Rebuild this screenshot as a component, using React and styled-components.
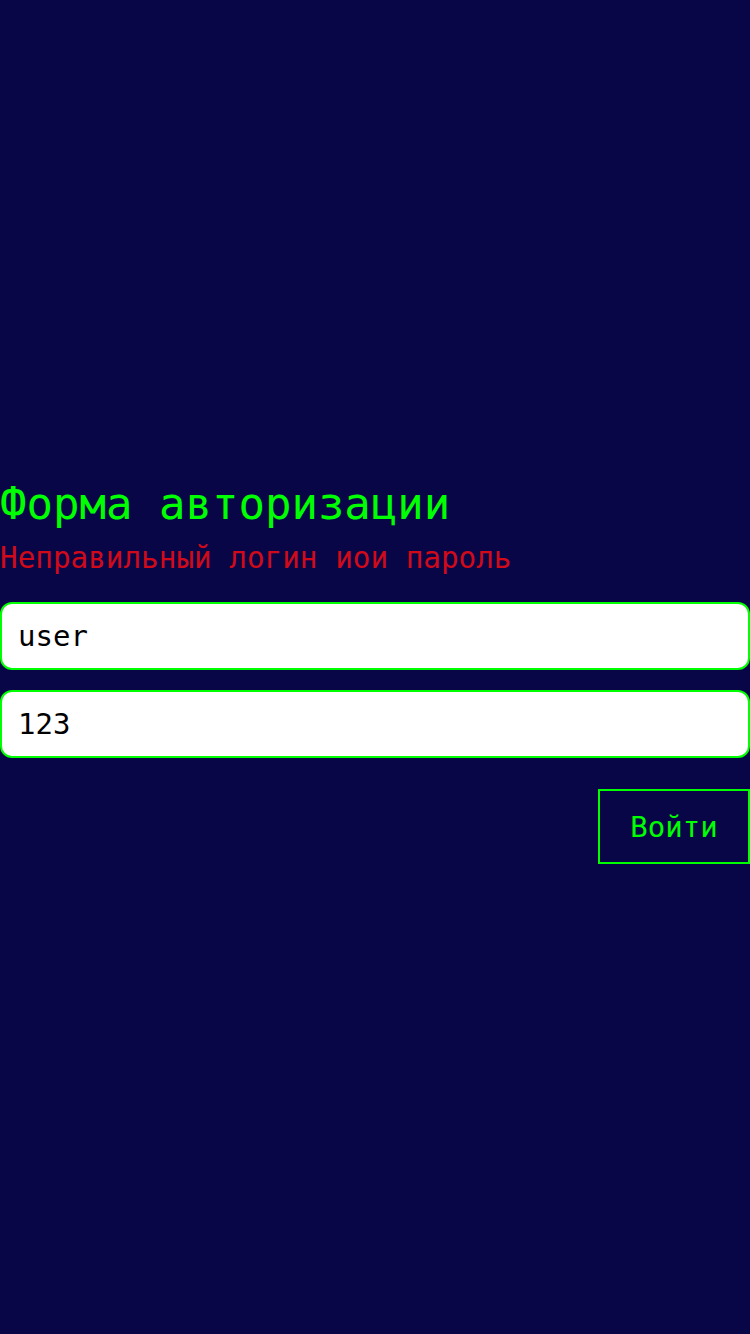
import React from 'react'
import styled, { createGlobalStyle } from 'styled-components'

const GlobalStyle = createGlobalStyle`
  html, body {
    margin: 0;
    padding: 0;
    background-color: #080647;
  }
  #root {
    min-height: 100vh;
    display: flex;
    flex-direction: column;
    justify-content: center;
  }
`

const App = () => {
  return (
    <>
      <GlobalStyle />
      <Form onSubmit={(e) => e.preventDefault()}>
        <Title>Форма авторизации</Title>
        <Error>Неправильный логин иои пароль</Error>
        <Input type="text" defaultValue="user" />
        <Input type="text" defaultValue="123" />
        <Actions>
          <Button type="submit">Войти</Button>
        </Actions>
      </Form>
    </>
  )
}

const Form = styled.form`
  display: flex;
  flex-direction: column;
  width: 100%;
  padding-top: 8px;
  font-family: "DejaVu Sans Mono", monospace;
`

const Title = styled.h1`
  margin: 0;
  font-size: 44px;
  font-weight: normal;
  line-height: 52px;
  color: #00ff00;
`

const Error = styled.div`
  margin-top: 10px;
  font-size: 29.3px;
  line-height: 36px;
  color: #d10a1a;
`

const Input = styled.input`
  box-sizing: border-box;
  width: 100%;
  height: 68px;
  margin-top: 26px;
  padding: 0 16px;
  border: 2px solid #00ff00;
  border-radius: 12px;
  background: #fff;
  color: #000;
  font-family: "DejaVu Sans Mono", monospace;
  font-size: 29px;
  outline: none;
  & + & {
    margin-top: 20px;
  }
`

const Actions = styled.div`
  display: flex;
  justify-content: flex-end;
  margin-top: 31px;
`

const Button = styled.button`
  box-sizing: border-box;
  width: 152px;
  height: 75px;
  border: 2px solid #00ff00;
  border-radius: 0;
  background: transparent;
  color: #00ff00;
  font-family: "DejaVu Sans Mono", monospace;
  font-size: 29px;
  cursor: pointer;
`

export default App
